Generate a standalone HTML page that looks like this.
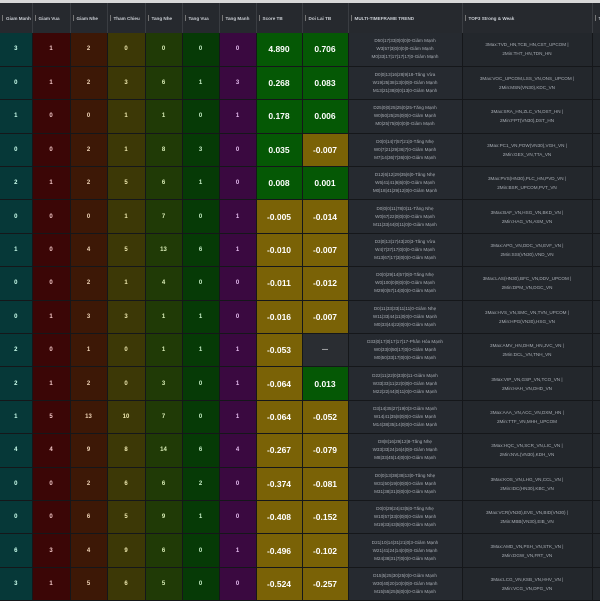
<!DOCTYPE html>
<html><head><meta charset="utf-8"><style>
*{margin:0;padding:0;box-sizing:border-box}
body{width:600px;height:600px;overflow:hidden;background:#1f2125;font-family:"Liberation Sans",sans-serif}
.top{height:3px;background:#d8d8d8}
table{border-collapse:collapse;table-layout:fixed;width:620px}
th{height:30px;background:#26292e;color:#c8ccd2;font-size:4.6px;font-weight:bold;text-align:left;padding-left:6px;border-right:1px solid #3a3d42;position:relative;white-space:nowrap;overflow:hidden}
th:before{content:"";position:absolute;left:2px;top:12px;width:1px;height:6px;background:#777}
td{height:33.4px;border-bottom:1px solid #15171a;border-right:1px solid #15171a;text-align:center;font-size:6px;color:#dcdcdc;font-weight:bold;overflow:hidden;white-space:nowrap}
td.c0{background:#063838;color:#cfe}
td.c1{background:#3b0606;color:#f3c8c8}
td.c2{background:#3d1806;color:#f2d6b8}
td.c3{background:#3c3806;color:#efe9b0}
td.c4{background:#203a06;color:#dbefb8}
td.c5{background:#063a06;color:#c8f0c8}
td.c6{background:#3a0940;color:#e6bdf0}
td.g{background:#055805;color:#fff;font-size:8.5px}
td.o{background:#7a6206;color:#fff;font-size:8.5px}
td.n{background:#2a2d32;color:#ddd;font-size:6px}
td.t{background:#262a30;color:#a8adb4;font-size:4.6px;font-weight:normal;line-height:8px}
td.s{background:#23272c;color:#a8adb4;font-size:4.6px;font-weight:normal;line-height:9px}
td.x{background:#23272c}
</style></head><body>
<div class="top"></div>
<table>
<colgroup><col style="width:32px"><col style="width:38px"><col style="width:37px"><col style="width:38px"><col style="width:37px"><col style="width:37px"><col style="width:37px"><col style="width:46px"><col style="width:46px"><col style="width:114px"><col style="width:130px"><col style="width:28px"></colgroup>
<tr><th>Giam Manh</th><th>Giam Vua</th><th>Giam Nhe</th><th>Tham Chieu</th><th>Tang Nhe</th><th>Tang Vua</th><th>Tang Manh</th><th>Score TB</th><th>Doi Lai TB</th><th>MULTI-TIMEFRAME TREND</th><th>TOP3 Strong &amp; Weak</th><th>TA</th></tr>
<tbody id="b"></tbody>
</table>
<script>
var R=[
[3,1,2,0,0,0,0,"4.890","0.706","D50|17|33|0|0|0|0-Giảm Mạnh","W3|57|3|0|0|0|0-Giảm Mạnh","M0|33|17|17|17|17|0-Giảm Mạnh","TVD_HN,TCB_HN,CST_UPCOM","THT_HN,TDN_HN"],
[0,1,2,3,6,1,3,"0.268","0.083","D0|0|13|16|28|9|18-Tăng Vừa","W19|25|38|13|0|0|0-Giảm Mạnh","M13|21|38|0|0|13|0-Giảm Mạnh","VOC_UPCOM,LSS_VN,ONS_UPCOM","MSN(VN30),KDC_VN"],
[1,0,0,1,1,0,1,"0.178","0.006","D25|0|0|25|25|0|25-Tăng Mạnh","W0|50|25|25|0|0|0-Giảm Mạnh","M0|25|75|0|0|0|0-Giảm Mạnh","SRA_HN,ZLC_VN,DST_HN","FPT(VN30),DST_HN"],
[0,0,2,1,8,3,0,"0.035","-0.007","D0|0|14|7|57|21|0-Tăng Nhẹ","W0|7|21|29|36|7|0-Giảm Mạnh","M7|14|36|7|36|0|0-Giảm Mạnh","PC1_VN,POW(VN30),VGH_VN","GEX_VN,TTA_VN"],
[2,1,2,5,6,1,0,"0.008","0.001","D12|6|12|29|35|6|0-Tăng Nhẹ","W6|41|41|6|6|0|0-Giảm Mạnh","M0|18|41|29|12|0|0-Giảm Mạnh","PVS(HN30),PLC_HN,PVD_VN","BSR_UPCOM,PVT_VN"],
[0,0,0,1,7,0,1,"-0.005","-0.014","D0|0|0|11|78|0|11-Tăng Nhẹ","W0|67|22|0|0|0|0-Giảm Mạnh","M11|33|44|0|11|0|0-Giảm Mạnh","BAF_VN,HSG_VN,BKD_VN","HAG_VN,ASM_VN"],
[1,0,4,5,13,6,1,"-0.010","-0.007","D3|0|13|17|43|20|3-Tăng Vừa","W4|7|37|17|0|0|0-Giảm Mạnh","M13|67|17|3|0|0|0-Giảm Mạnh","APG_VN,DDC_VN,EVF_VN","SSI(VN30),VND_VN"],
[0,0,2,1,4,0,0,"-0.011","-0.012","D0|0|29|14|57|0|0-Tăng Nhẹ","W0|100|0|0|0|0|0-Giảm Mạnh","M29|0|57|14|0|0|0-Giảm Mạnh","LAS(HN30),BFC_VN,DDV_UPCOM","DPM_VN,DGC_VN"],
[0,1,3,3,1,1,0,"-0.016","-0.007","D0|11|33|33|11|11|0-Giảm Nhẹ","W11|33|44|11|0|0|0-Giảm Mạnh","M0|33|44|22|0|0|0-Giảm Mạnh","HVS_VN,SMC_VN,TVN_UPCOM","HPG(VN30),HSG_VN"],
[2,0,1,0,1,1,1,"-0.053","—","D33|0|17|0|17|17|17-Phân Hóa Mạnh","W0|33|0|50|17|0|0-Giảm Mạnh","M0|50|33|17|0|0|0-Giảm Mạnh","AMV_HN,DHM_HN,JVC_VN","DCL_VN,TNH_VN"],
[2,1,2,0,3,0,1,"-0.064","0.013","D22|11|22|0|33|0|11-Giảm Mạnh","W33|33|11|22|0|0|0-Giảm Mạnh","M22|22|44|0|11|0|0-Giảm Mạnh","VIP_VN,GSP_VN,TCO_VN","HAH_VN,DHD_VN"],
[1,5,13,10,7,0,1,"-0.064","-0.052","D3|14|35|27|19|0|3-Giảm Mạnh","W14|41|35|8|0|0|0-Giảm Mạnh","M14|38|35|14|0|0|0-Giảm Mạnh","AAA_VN,ACC_VN,DXM_HN","TTF_VN,MHH_UPCOM"],
[4,4,9,8,14,6,4,"-0.267","-0.079","D8|8|16|29|12|8-Tăng Nhẹ","W33|33|24|16|4|0|0-Giảm Mạnh","M8|33|45|14|0|0|0-Giảm Mạnh","HQC_VN,SCR_VN,LIC_VN","NVL(VN30),KDH_VN"],
[0,0,2,6,6,2,0,"-0.374","-0.081","D0|0|13|38|38|13|0-Tăng Nhẹ","W31|50|19|0|0|0|0-Giảm Mạnh","M31|38|31|0|0|0|0-Giảm Mạnh","KOS_VN,LHG_VN,CCL_VN","IDC(HN30),KBC_VN"],
[0,0,6,5,9,1,0,"-0.408","-0.152","D0|0|29|24|43|5|0-Tăng Nhẹ","W10|57|33|0|0|0|0-Giảm Mạnh","M19|33|43|5|0|0|0-Giảm Mạnh","VCR(VN30),EVE_VN,BID(VN30)","MBB(VN30),EIB_VN"],
[6,3,4,9,6,0,1,"-0.496","-0.102","D21|10|14|31|21|0|3-Giảm Mạnh","W21|41|24|14|0|0|0-Giảm Mạnh","M24|38|31|7|0|0|0-Giảm Mạnh","AMD_VN,PSH_VN,STK_VN","DGW_VN,FRT_VN"],
[3,1,5,6,5,0,0,"-0.524","-0.257","D15|5|25|30|25|0|0-Giảm Mạnh","W30|40|20|10|0|0|0-Giảm Mạnh","M15|55|25|5|0|0|0-Giảm Mạnh","LCG_VN,KSB_VN,HHV_VN","VCG_VN,DPG_VN"]];
var h="";
R.forEach(function(r){h+="<tr>";for(var i=0;i<7;i++)h+='<td class="c'+i+'">'+r[i]+"</td>";
[r[7],r[8]].forEach(function(v){var c=v=="—"?"n":(v[0]=="-"?"o":"g");h+='<td class="'+c+'">'+v+"</td>";});
h+='<td class="t">'+r[9]+"<br>"+r[10]+"<br>"+r[11]+"</td>";
h+='<td class="s">3Max:'+r[12]+" |<br>2Min:"+r[13]+'</td><td class="x"></td></tr>';});
document.getElementById("b").innerHTML=h;
</script>
</body></html>
